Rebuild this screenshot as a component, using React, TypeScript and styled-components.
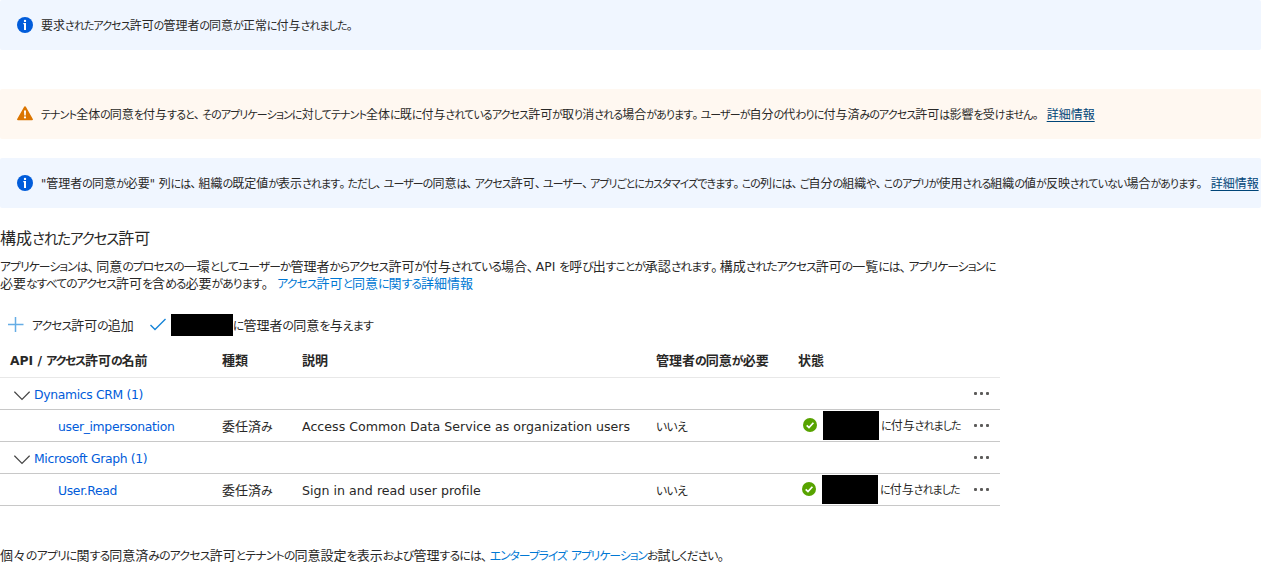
import React from 'react';
import styled, { createGlobalStyle } from 'styled-components';

const GlobalStyle = createGlobalStyle`
  body {
    margin: 0;
    background: #fff;
    overflow: hidden;
    color: #292827;
    font-family: 'Noto Sans CJK JP', sans-serif;
    font-size: 13px;
  }
  * { box-sizing: border-box; }
`;

const Page = styled.main`
  width: 1261px;
  height: 563px;
  overflow: hidden;
`;

const Line = styled.span`
  white-space: pre;
`;

const Kana = styled.span<{ $gap: number }>`
  font-size: 0.91em;
  font-feature-settings: 'palt';
  letter-spacing: ${(p) => p.$gap}em;
  line-height: 1;
`;

const Mark = styled.span`
  margin-right: 0.18em;
  font-feature-settings: 'palt';
  line-height: 1;
`;

const Latin = styled.span`
  font-family: 'DejaVu Sans', sans-serif;
  font-size: 0.95em;
  line-height: 1;
`;

/* Sets kana tighter than kanji, and Latin letters in their own face. */
function Jp({ children, gap = -0.078 }: { children: string; gap?: number }) {
  const runs = children.match(/[\u3001-\u3002]|[\u3040-\u30ff]+|[\x20-\x7e]+|[^\x20-\x7e\u3001-\u3002\u3040-\u30ff]+/g) ?? [];
  return (
    <Line>
      {runs.map((run, i) => {
        if (/^[\u3001-\u3002]/.test(run)) return <Mark key={i}>{run}</Mark>;
        if (/^[\u3040-\u30ff]/.test(run)) return <Kana key={i} $gap={gap}>{run}</Kana>;
        if (/^[\x20-\x7e]/.test(run)) return <Latin key={i}>{run}</Latin>;
        return <React.Fragment key={i}>{run}</React.Fragment>;
      })}
    </Line>
  );
}

const Banner = styled.section<{ $tone: 'info' | 'warning'; $after: number }>`
  display: flex;
  align-items: center;
  height: 50px;
  margin-bottom: ${(p) => p.$after}px;
  padding-left: 17px;
  border-radius: 2px;
  background: ${(p) => (p.$tone === 'info' ? '#f0f6ff' : '#fff8f1')};
  font-size: 12px;
  line-height: 18px;
  white-space: nowrap;
  svg { flex: none; margin-right: 8px; }
`;

const MoreLink = styled.a`
  margin-left: 6px;
  color: #004578;
  text-decoration: underline;
  text-underline-offset: 2px;
`;

const Title = styled.h2`
  margin: 18px 0 0;
  font-size: 16px;
  font-weight: 400;
  line-height: 22px;
`;

const Intro = styled.div`
  margin-top: 9px;
`;

const IntroLine = styled.p`
  display: flex;
  align-items: center;
  gap: 3px;
  height: 17px;
  margin: 0;
  line-height: 17px;
  white-space: nowrap;
`;

const BlueLink = styled.a`
  color: #0078d4;
`;

const Toolbar = styled.div`
  display: flex;
  align-items: center;
  height: 24px;
  margin-top: 22px;
  padding-left: 8px;
  line-height: 20px;
`;

const Command = styled.button<{ $gap: number; $after: number }>`
  display: flex;
  align-items: center;
  gap: ${(p) => p.$gap}px;
  margin: 0 ${(p) => p.$after}px 0 0;
  padding: 0;
  border: 0;
  background: none;
  color: inherit;
  font: inherit;
`;

const Redacted = styled.span<{ $w: number; $h: number }>`
  display: block;
  flex: none;
  width: ${(p) => p.$w}px;
  height: ${(p) => p.$h}px;
  background: #000;
`;

const Consent = styled.span`
  display: flex;
  align-items: center;
`;

const Table = styled.div`
  width: 1000px;
`;

const Row = styled.div<{ $head?: boolean }>`
  display: grid;
  grid-template-columns: 212px 80px 354px 142px 1fr;
  align-items: center;
  height: ${(p) => (p.$head ? 41 : 32)}px;
  padding: ${(p) => (p.$head ? '5px 10px 0' : '0 10px 0')};
  border-bottom: 1px solid ${(p) => (p.$head ? '#e8e8e8' : '#c8c8c8')};
  font-weight: ${(p) => (p.$head ? 700 : 400)};
  line-height: 20px;
  white-space: nowrap;
`;

const GroupRow = styled.div`
  display: flex;
  align-items: center;
  height: 32px;
  padding: 0 10px 0 14px;
  border-bottom: 1px solid #c8c8c8;
  svg { margin: 3px 4px 0 0; }
`;

const NameLink = styled.a<{ $indent?: number }>`
  padding: 2px 0 0 ${(p) => p.$indent ?? 0}px;
  color: #015cda;
  font-family: 'DejaVu Sans', sans-serif;
  font-size: 12.4px;
  letter-spacing: -0.34px;
  line-height: 20px;
`;

const Description = styled.span`
  padding-top: 2px;
  font-family: 'DejaVu Sans', sans-serif;
  font-size: 12.6px;
  letter-spacing: 0.02px;
`;

const Status = styled.span<{ $inset: number }>`
  display: flex;
  align-items: center;
  height: 31px;
  padding: 0 0 2px ${(p) => p.$inset}px;
  font-size: 12px;
  ${Redacted} { margin: 2px 2px 0 6px; }
`;

const Dots = styled.span<{ $drop?: boolean }>`
  display: flex;
  gap: 3px;
  margin: ${(p) => (p.$drop ? 2 : 0)}px 1px 0 auto;
  i { width: 3px; height: 3px; border-radius: 1px; background: #5c5b5a; }
`;

const Footer = styled.p`
  display: flex;
  align-items: center;
  height: 20px;
  margin: 39px 0 0;
  line-height: 20px;
  white-space: nowrap;
`;

const InfoIcon = () => (
  <svg width="16" height="16" viewBox="0 0 16 16">
    <circle cx="8" cy="8" r="8" fill="#015cda" />
    <circle cx="8" cy="3.9" r="1.2" fill="#fff" />
    <path d="M6.300 6H9v7H7V7.200h-.7Z" fill="#fff" />
  </svg>
);

const WarningIcon = () => (
  <svg width="16" height="16" viewBox="0 0 16 16">
    <path d="M8 .2c.5 0 .8.3 1 .7l6.800 12c.4.8 0 1.400-.8 1.400H1c-.8 0-1.200-.6-.8-1.400L7 .9c.2-.4.5-.7 1-.7Z" fill="#db7500" />
    <path d="M7 4.500h2l-.25 5h-1.500Z" fill="#fff" />
    <circle cx="8" cy="11.400" r="1.1" fill="#fff" />
  </svg>
);

const PlusIcon = () => (
  <svg width="16" height="16" viewBox="0 0 16 16" fill="none" stroke="#65ade5" strokeWidth="1.5">
    <path d="M7.500 0v15M0 7.500h15.500" />
  </svg>
);

const CheckIcon = () => (
  <svg width="16" height="16" viewBox="0 0 16 16" fill="none" stroke="#1684d8" strokeWidth="1.4">
    <path d="M.5 8 5 12.500 15.500 2" />
  </svg>
);

const Chevron = () => (
  <svg width="16" height="16" viewBox="0 0 16 16" fill="none" stroke="#444" strokeWidth="1.2">
    <path d="M.4 4.700 8 12.300l7.600-7.600" />
  </svg>
);

const GrantedIcon = () => (
  <svg width="14" height="14" viewBox="0 0 14 14">
    <circle cx="7" cy="7" r="7" fill="#57a300" />
    <path d="m3.700 7.300 2.300 2.300 4.400-4.900" fill="none" stroke="#fff" strokeWidth="1.7" />
  </svg>
);

const More = ({ drop }: { drop?: boolean }) => <Dots $drop={drop}><i /><i /><i /></Dots>;

const groups = [
  { name: 'Dynamics CRM (1)', scope: 'user_impersonation', text: 'Access Common Data Service as organization users', inset: 5 },
  { name: 'Microsoft Graph (1)', scope: 'User.Read', text: 'Sign in and read user profile', inset: 4 },
];

export default function App() {
  return (
    <Page>
      <GlobalStyle />
      <Banner $tone="info" $after={39}>
        <InfoIcon />
        <Jp>要求されたアクセス許可の管理者の同意が正常に付与されました。</Jp>
      </Banner>
      <Banner $tone="warning" $after={19}>
        <WarningIcon />
        <Jp gap={-0.075}>テナント全体の同意を付与すると、そのアプリケーションに対してテナント全体に既に付与されているアクセス許可が取り消される場合があります。ユーザーが自分の代わりに付与済みのアクセス許可は影響を受けません。</Jp>
        <MoreLink>詳細情報</MoreLink>
      </Banner>
      <Banner $tone="info" $after={0}>
        <InfoIcon />
        <Jp>"管理者の同意が必要" 列には、組織の既定値が表示されます。ただし、ユーザーの同意は、アクセス許可、ユーザー、アプリごとにカスタマイズできます。この列には、ご自分の組織や、このアプリが使用される組織の値が反映されていない場合があります。</Jp>
        <MoreLink>詳細情報</MoreLink>
      </Banner>

      <Title><Jp>構成されたアクセス許可</Jp></Title>
      <Intro>
        <IntroLine>
          <Jp gap={-0.081}>アプリケーションは、同意のプロセスの一環としてユーザーか管理者からアクセス許可が付与されている場合、API を呼び出すことが承認されます。構成されたアクセス許可の一覧には、アプリケーションに</Jp>
        </IntroLine>
        <IntroLine>
          <Jp>必要なすべてのアクセス許可を含める必要があります。 </Jp>
          <BlueLink><Jp>アクセス許可と同意に関する詳細情報</Jp></BlueLink>
        </IntroLine>
      </Intro>

      <Toolbar>
        <Command $gap={8} $after={16}>
          <PlusIcon />
          <Jp>アクセス許可の追加</Jp>
        </Command>
        <Command $gap={5} $after={0}>
          <CheckIcon />
          <Consent>
            <Redacted $w={62} $h={22} />
            <Jp gap={-0.052}>に管理者の同意を与えます</Jp>
          </Consent>
        </Command>
      </Toolbar>

      <Table>
        <Row $head>
          <Jp gap={-0.1}>API / アクセス許可の名前</Jp>
          <Jp>種類</Jp>
          <Jp>説明</Jp>
          <Jp>管理者の同意が必要</Jp>
          <Jp>状態</Jp>
        </Row>
        {groups.map((g) => (
          <React.Fragment key={g.name}>
            <GroupRow>
              <Chevron />
              <NameLink>{g.name}</NameLink>
              <More />
            </GroupRow>
            <Row>
              <NameLink $indent={48}>{g.scope}</NameLink>
              <Jp>委任済み</Jp>
              <Description>{g.text}</Description>
              <Jp gap={-0.05}>いいえ</Jp>
              <Status $inset={g.inset}>
                <GrantedIcon />
                <Redacted $w={56} $h={29} />
                <Jp>に付与されました</Jp>
                <More drop />
              </Status>
            </Row>
          </React.Fragment>
        ))}
      </Table>

      <Footer>
        <Jp gap={-0.065}>個々のアプリに関する同意済みのアクセス許可とテナントの同意設定を表示および管理するには、</Jp>
        <BlueLink><Jp gap={-0.086}>エンタープライズ アプリケーション</Jp></BlueLink>
        <Jp gap={-0.08}>お試しください。</Jp>
      </Footer>
    </Page>
  );
}
